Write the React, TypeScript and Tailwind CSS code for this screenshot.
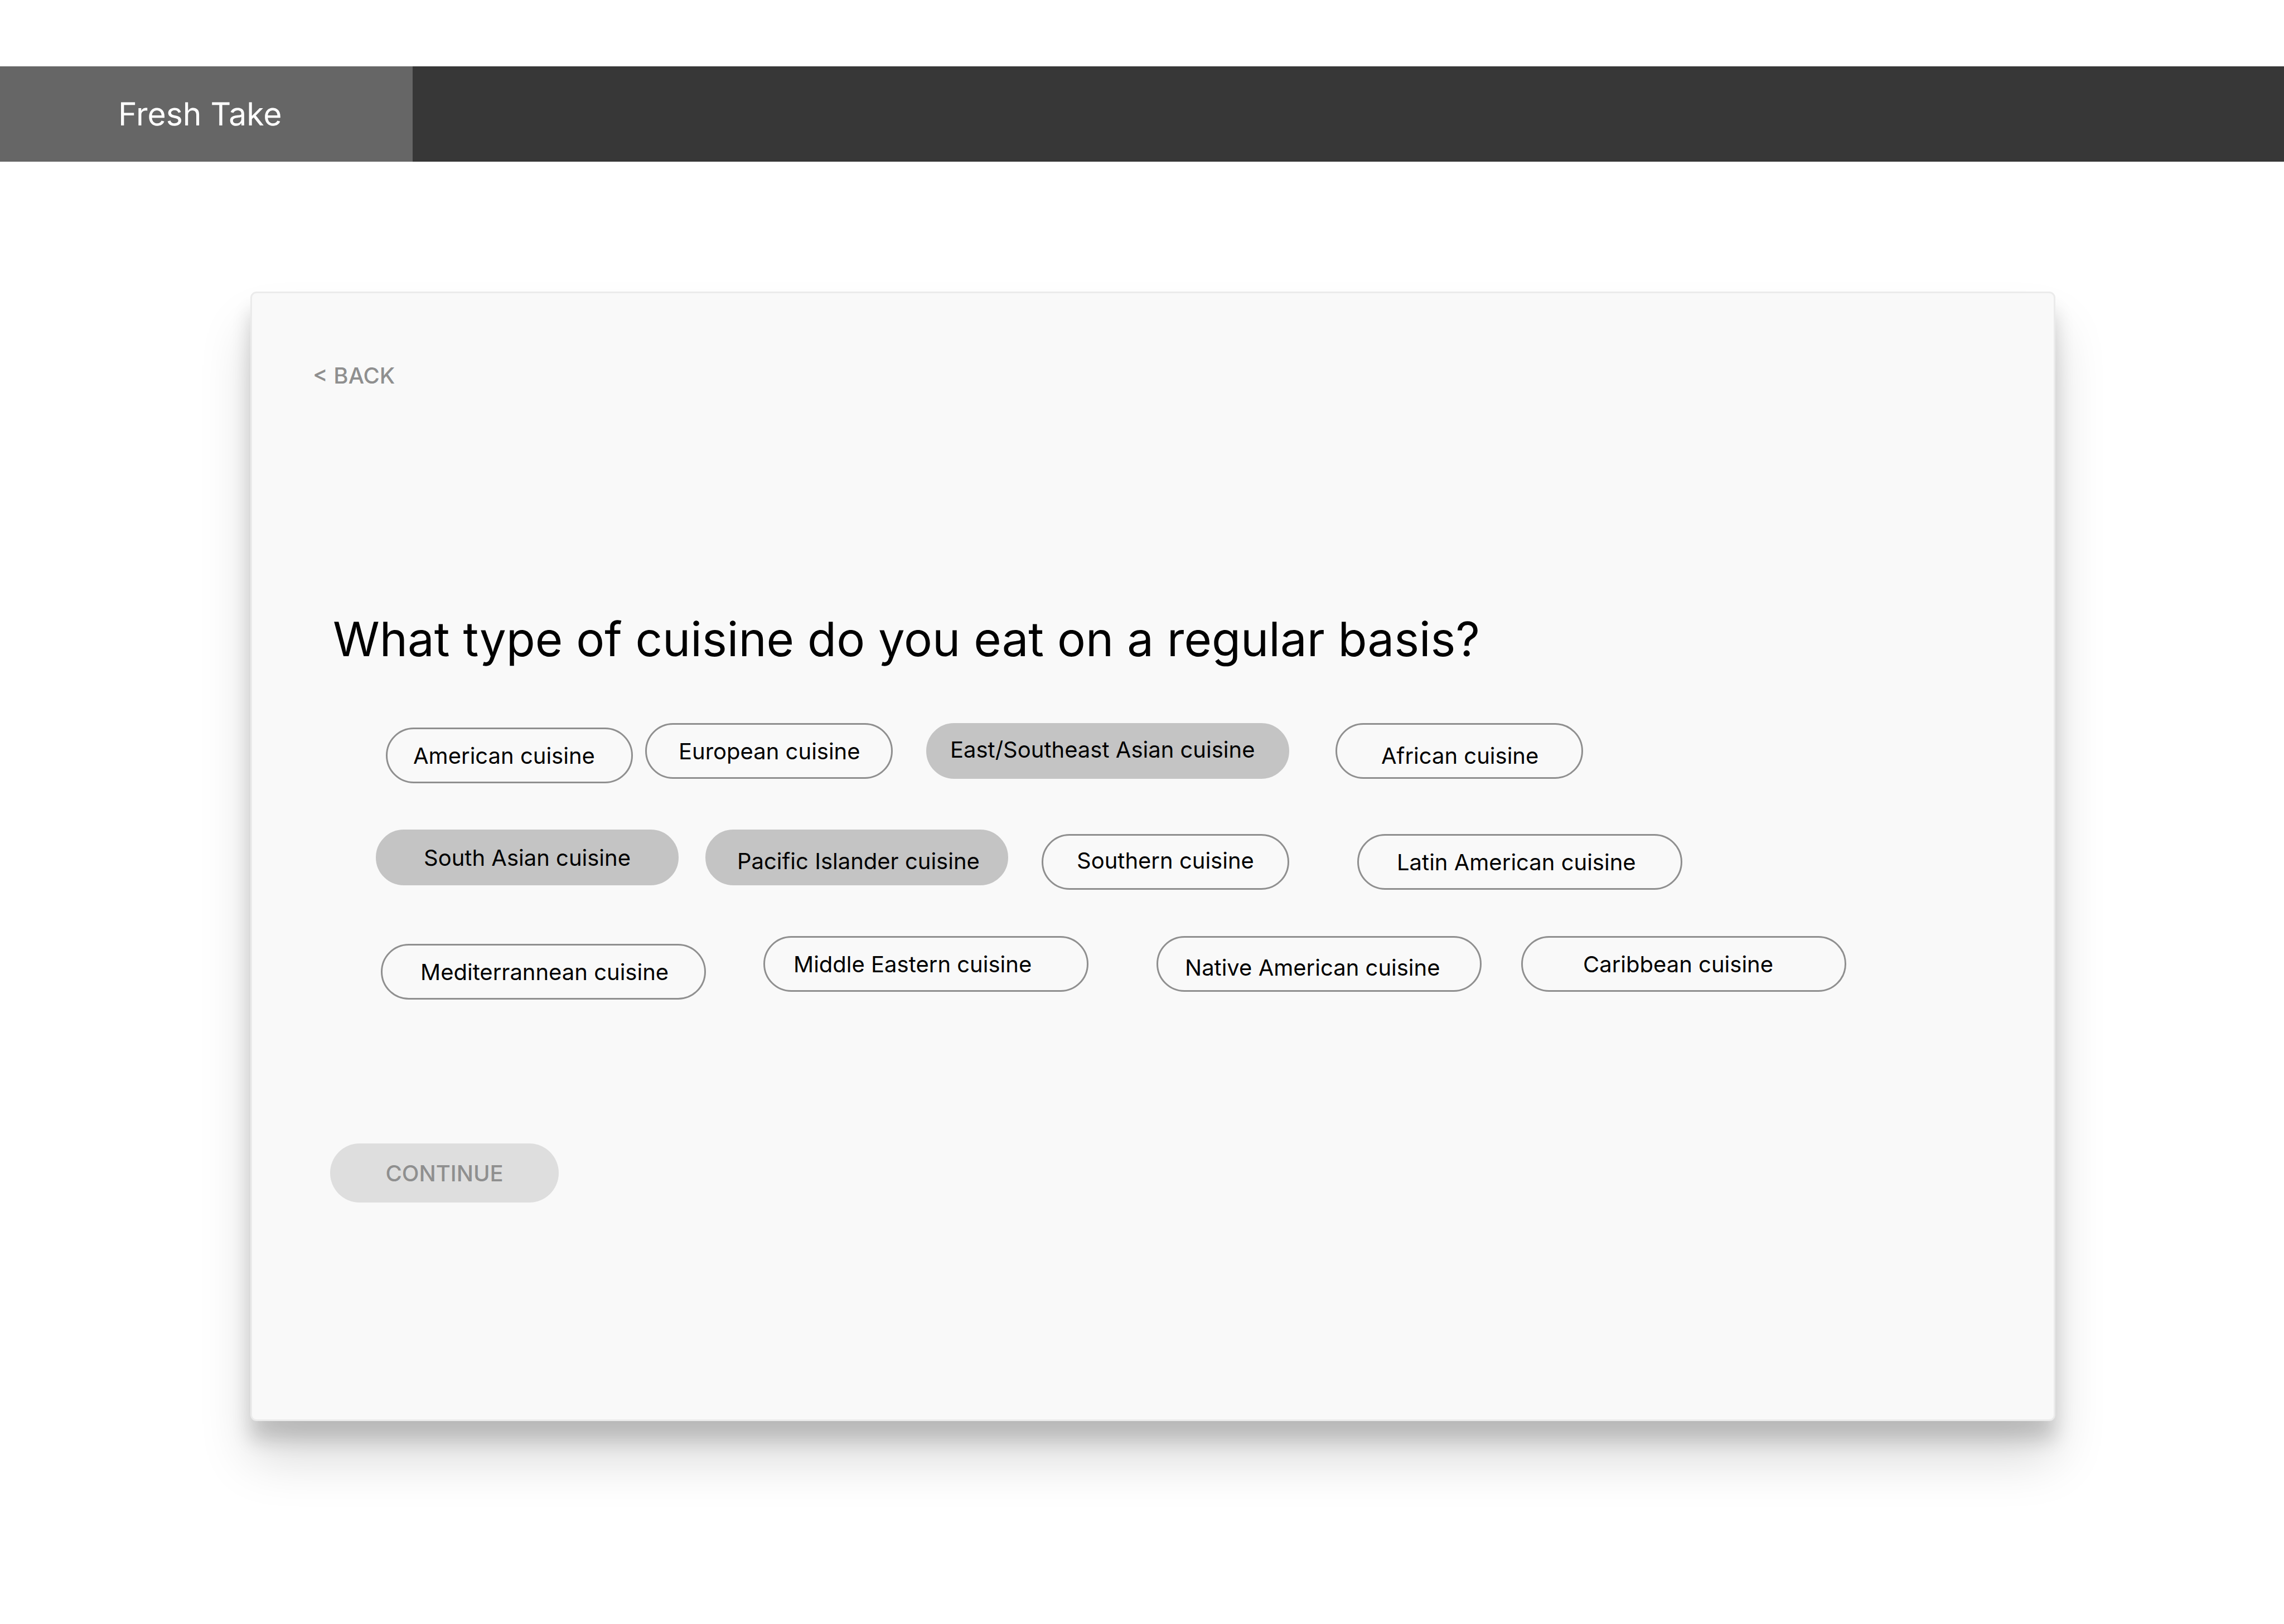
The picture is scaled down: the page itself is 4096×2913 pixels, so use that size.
import { useState } from "react";
import clsx from "clsx";

type Cuisine = { name: string; box: string };

const rows: { className: string; items: Cuisine[] }[] = [
  {
    className: "ml-[98px]",
    items: [
      { name: "American cuisine", box: "mt-2 w-[443px] pt-0.5 pl-[46px]" },
      { name: "European cuisine", box: "ml-[22px] w-[444px] pt-0.5 pl-[57px]" },
      { name: "East/Southeast Asian cuisine", box: "ml-[60px] w-[651px] pb-1 pl-[40px]" },
      { name: "African cuisine", box: "ml-[83px] w-[444px] pt-4.5 pl-[79px]" },
    ],
  },
  {
    className: "ml-[80px]",
    items: [
      { name: "South Asian cuisine", box: "w-[543px] pt-0.5 pl-[83px]" },
      { name: "Pacific Islander cuisine", box: "ml-[48px] w-[543px] pt-3.5 pl-[54px]" },
      { name: "Southern cuisine", box: "mt-2 ml-[60px] w-[444px] pb-1 pl-[60px]" },
      { name: "Latin American cuisine", box: "mt-2 ml-[122px] w-[583px] pt-0.5 pl-[68px]" },
    ],
  },
  {
    className: "ml-[89px]",
    items: [
      { name: "Mediterrannean cuisine", box: "mt-3.5 w-[583px] pt-0.5 pl-[68px]" },
      { name: "Middle Eastern cuisine", box: "ml-[103px] w-[583px] pt-0.5 pl-[51px]" },
      { name: "Native American cuisine", box: "ml-[122px] w-[583px] pt-3.5 pl-[48px]" },
      { name: "Caribbean cuisine", box: "ml-[71px] w-[583px] pt-0.5 pl-[108px]" },
    ],
  },
];

function Header() {
  return (
    <header className="mt-[119px] flex h-[171px] bg-[#373737]">
      <a
        href="#"
        className="flex w-[740px] items-center bg-[#666666] pl-[212px] text-[57px] leading-[68px] font-normal text-white"
      >
        Fresh Take
      </a>
    </header>
  );
}

function Chip({ cuisine, selected, onToggle }: { cuisine: Cuisine; selected: boolean; onToggle: () => void }) {
  return (
    <button
      type="button"
      aria-pressed={selected}
      onClick={onToggle}
      className={clsx(
        "flex h-[100px] shrink-0 items-center rounded-full border-3 text-[40px] leading-[48px] whitespace-nowrap text-black",
        selected ? "border-[#c4c4c4] bg-[#c4c4c4]" : "border-[#8f8f8f]",
        cuisine.box,
      )}
    >
      {cuisine.name}
    </button>
  );
}

export default function App() {
  const [selected, setSelected] = useState<string[]>([
    "East/Southeast Asian cuisine",
    "South Asian cuisine",
    "Pacific Islander cuisine",
  ]);

  const toggle = (name: string) =>
    setSelected((current) =>
      current.includes(name) ? current.filter((item) => item !== name) : [...current, name],
    );

  return (
    <div className="flow-root min-h-screen bg-white font-['Inter',sans-serif] [text-rendering:geometricPrecision]">
      <Header />
      <main className="mt-[233px] mr-[410px] mb-[120px] ml-[449px] flex flex-col items-start rounded-[11px] border-3 border-[#ebebeb] bg-[#f9f9f9] pt-[124px] pb-[389px] shadow-[0_68px_91px_rgba(0,0,0,0.15),0_34px_34px_rgba(0,0,0,0.16)]">
        <button type="button" className="ml-[109px] text-[40px] leading-[48px] font-medium text-[#8f8f8f]">
          &lt; BACK
        </button>
        <h1 className="mt-[397px] ml-[145px] text-[85px] leading-[104px] font-normal text-black">
          What type of cuisine do you eat on a regular basis?
        </h1>
        <div role="group" aria-label="Cuisines" className="mt-[98px] ml-[142px] flex flex-col gap-[83px]">
          {rows.map((row) => (
            <div key={row.className} className={clsx("flex items-start", row.className)}>
              {row.items.map((cuisine) => (
                <Chip
                  key={cuisine.name}
                  cuisine={cuisine}
                  selected={selected.includes(cuisine.name)}
                  onToggle={() => toggle(cuisine.name)}
                />
              ))}
            </div>
          ))}
        </div>
        <button
          type="button"
          className="mt-[258px] ml-[140px] h-[106px] w-[410px] rounded-full bg-[#dedede] pt-0.5 text-[40px] leading-[48px] font-medium text-[#8f8f8f]"
        >
          CONTINUE
        </button>
      </main>
    </div>
  );
}
